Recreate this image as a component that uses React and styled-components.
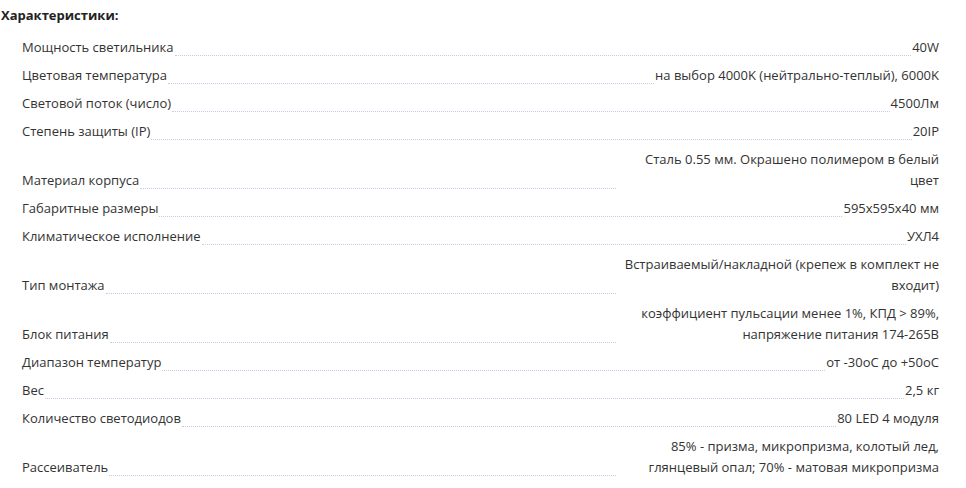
import React from "react";
import styled, { createGlobalStyle } from "styled-components";

const Global = createGlobalStyle`
  html, body { margin: 0; padding: 0; background: #fff; }
  body {
    font-family: "Open Sans", "Noto Sans", "DejaVu Sans", sans-serif;
    color: #333;
  }
`;

const Wrap = styled.section`
  width: 966px;
  box-sizing: border-box;
`;

const Title = styled.h3`
  margin: 5px 0 8px 1px;
  font-size: 13px;
  line-height: 21px;
  font-weight: 700;
  color: #222;
`;

const List = styled.dl`
  margin: 0;
  padding: 0 27px 0 22px;
  display: flex;
  flex-direction: column;
`;

const Row = styled.div`
  display: flex;
  align-items: flex-end;
  padding: 3px 0 4px;
  font-size: 13px;
  line-height: 21px;
`;

const Label = styled.dt`
  flex: none;
  white-space: nowrap;
  margin: 0;
`;

const Leader = styled.span`
  flex: 1 1 auto;
  min-width: 8px;
  height: 0;
  margin: 0 1px 2px;
  border-bottom: 1px dotted #c9cbe3;
`;

const Value = styled.dd`
  flex: 0 1 auto;
  max-width: 322px;
  margin: 0;
  text-align: right;
`;

const specs = [
  ["Мощность светильника", "40W"],
  ["Цветовая температура", "на выбор 4000K (нейтрально-теплый), 6000K"],
  ["Световой поток (число)", "4500Лм"],
  ["Степень защиты (IP)", "20IP"],
  ["Материал корпуса", "Сталь 0.55 мм. Окрашено полимером в белый цвет"],
  ["Габаритные размеры", "595x595x40 мм"],
  ["Климатическое исполнение", "УХЛ4"],
  ["Тип монтажа", "Встраиваемый/накладной (крепеж в комплект не входит)"],
  ["Блок питания", "коэффициент пульсации менее 1%, КПД > 89%, напряжение питания 174-265В"],
  ["Диапазон температур", "от -30оС до +50оС"],
  ["Вес", "2,5 кг"],
  ["Количество светодиодов", "80 LED 4 модуля"],
  ["Рассеиватель", "85% - призма, микропризма, колотый лед, глянцевый опал; 70% - матовая микропризма"],
];

export default function App() {
  return (
    <Wrap>
      <Global />
      <Title>Характеристики:</Title>
      <List>
        {specs.map(([k, v]) => (
          <Row key={k}>
            <Label>{k}</Label>
            <Leader />
            <Value>{v}</Value>
          </Row>
        ))}
      </List>
    </Wrap>
  );
}
